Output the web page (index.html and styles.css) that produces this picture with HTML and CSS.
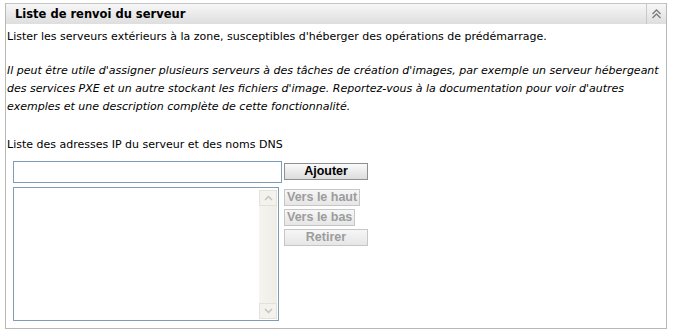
FILE: index.html
```html
<!DOCTYPE html>
<html lang="fr">
<head>
    <meta charset="UTF-8">
    <meta name="viewport" content="width=device-width, initial-scale=1.0">
    <title>Liste de renvoi du serveur</title>
    <link rel="stylesheet" href="styles.css">
</head>
<body>
    <div class="panel">
        <div class="panel-head">
            <span class="panel-title">Liste de renvoi du serveur</span>
            <span class="collapse">
                <svg width="11" height="10" viewBox="0 0 11 10">
                    <path d="M1.5 5 L5.5 1 L9.5 5 M1.5 9 L5.5 5 L9.5 9" fill="none" stroke="#7a7a7a" stroke-width="1.3"/>
                </svg>
            </span>
        </div>
        <div class="panel-body">
            <p class="intro">Lister les serveurs extérieurs à la zone, susceptibles d'héberger des opérations de prédémarrage.</p>
            <p class="note">Il peut être utile d'assigner plusieurs serveurs à des tâches de création d'images, par exemple un serveur hébergeant des services PXE et un autre stockant les fichiers d'image. Reportez-vous à la documentation pour voir d'autres exemples et une description complète de cette fonctionnalité.</p>
            <p class="label">Liste des adresses IP du serveur et des noms DNS</p>
            <div class="editor">
                <div class="fields">
                    <input class="addr" type="text">
                    <div class="listbox">
                        <div class="scroll">
                            <span class="arrow">
                                <svg width="9" height="6" viewBox="0 0 9 6"><path d="M1 5 L4.5 1.5 L8 5" fill="none" stroke="#c4c4bc" stroke-width="1.5"/></svg>
                            </span>
                            <span class="arrow">
                                <svg width="9" height="6" viewBox="0 0 9 6"><path d="M1 1 L4.5 4.5 L8 1" fill="none" stroke="#c4c4bc" stroke-width="1.5"/></svg>
                            </span>
                        </div>
                    </div>
                </div>
                <div class="actions">
                    <button class="btn wide">Ajouter</button>
                    <button class="btn off up">Vers le haut</button>
                    <button class="btn off">Vers le bas</button>
                    <button class="btn off wide">Retirer</button>
                </div>
            </div>
        </div>
    </div>
</body>
</html>
```

FILE: styles.css
```css
body {
    margin: 0;
    background-color: #fff;
    font-family: "DejaVu Sans", Verdana, sans-serif;
    font-size: 11px;
    color: #000;
}
.panel {
    margin: 3px 4px 0 5px;
    width: 662px;
    height: 326px;
    border: 1px solid #b9b9b4;
    border-top-color: #c4c4c4;
    box-sizing: border-box;
}
.panel-head {
    display: flex;
    height: 20px;
    background: linear-gradient(#f7f7f7, #dedede);
}
.panel-title {
    flex: 1;
    padding-left: 9px;
    line-height: 20px;
    font-weight: bold;
    font-size: 11.5px;
}
.collapse {
    width: 19px;
    border-left: 1px solid #c8c8c8;
    display: flex;
    align-items: center;
    justify-content: center;
}
.panel-body {
    padding: 0 1px;
}
.panel-body p {
    margin: 0;
}
.intro {
    line-height: 22px;
    padding-top: 2px;
}
.note {
    font-style: italic;
    line-height: 18px;
    padding-top: 14px;
}
.label {
    padding-top: 20px;
    line-height: 18px;
}
.editor {
    display: flex;
    margin: 7px 0 0 6px;
}
.fields {
    display: flex;
    flex-direction: column;
    width: 269px;
}
.addr {
    height: 22px;
    width: 269px;
    box-sizing: border-box;
    border: 1px solid #7f9db9;
    margin: 0;
}
.listbox {
    margin-top: 4px;
    width: 266px;
    height: 134px;
    box-sizing: border-box;
    border: 1px solid #7f9db9;
    display: flex;
    justify-content: flex-end;
    padding: 2px 1px 1px 0;
}
.scroll {
    width: 18px;
    background: linear-gradient(90deg, #f5f4ef, #eeede6);
    display: flex;
    flex-direction: column;
    justify-content: space-between;
}
.arrow {
    height: 16px;
    border: 1px solid #e2e1da;
    background: #f3f2ec;
    box-sizing: border-box;
    display: flex;
    align-items: center;
    justify-content: center;
}
.actions {
    display: flex;
    flex-direction: column;
    align-items: flex-start;
    margin-left: 2px;
    padding-top: 2px;
}
.btn {
    font-family: "Liberation Sans", Arial, sans-serif;
    font-weight: bold;
    font-size: 12.5px;
    height: 17px;
    padding: 0 2px;
    margin: 0 0 3px 0;
    border: 1px solid #8f8f8f;
    background: linear-gradient(#fafafa, #dcdcdc);
    color: #000;
    line-height: 15px;
}
.wide {
    width: 84px;
}
.off {
    color: #9c9c9c;
    border-color: #c6c6c6;
    background: linear-gradient(#f6f6f6, #e6e6e6);
}
.up {
    margin-top: 6px;
}
```
